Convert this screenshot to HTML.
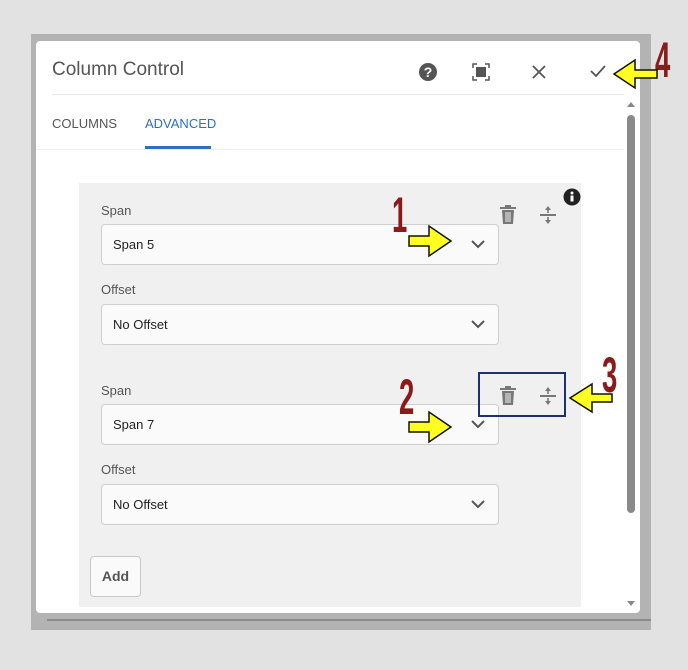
<!DOCTYPE html>
<html><head><style>
*{box-sizing:border-box;margin:0;padding:0}
body{width:688px;height:670px;background:#e2e2e2;position:relative;overflow:hidden;font-family:"Liberation Sans",sans-serif}
.abs{position:absolute}
.lbl{position:absolute;left:101px;font-size:13px;color:#555}
.fld{position:absolute;left:101px;width:398px;height:41px;background:#fafafa;border:1px solid #cfcfcf;border-radius:4px;font-size:13px;color:#222;padding:12px 11px}
.fld svg{position:absolute;right:13px;top:15px}
.num{position:absolute;font-family:"Liberation Sans",sans-serif;font-weight:bold;color:#8b1a1a;font-size:50px;line-height:1;transform:scaleX(0.55);transform-origin:left top}
</style></head><body>
<div class="abs" style="left:31px;top:34px;width:620px;height:596px;background:#b3b3b3"></div>
<div class="abs" style="left:47px;top:619px;width:604px;height:2px;background:#8a8a8a"></div>
<div class="abs" style="left:36px;top:41px;width:604px;height:572px;background:#fff;border-radius:4px"></div>
<div class="abs" style="left:52px;top:59px;font-size:19px;color:#555">Column Control</div>
<svg class="abs" style="left:418px;top:62px" width="20" height="20"><circle cx="10" cy="10" r="9" fill="#555"/><text x="10" y="15" text-anchor="middle" font-size="14" font-weight="bold" fill="#fff" font-family="Liberation Sans">?</text></svg>
<svg class="abs" style="left:471px;top:62px" width="20" height="20" fill="none" stroke="#555" stroke-width="1.5"><path d="M2 6V2h4M14 2h4v4M18 14v4h-4M6 18H2v-4"/><rect x="5" y="5" width="10" height="10" fill="#555" stroke="none"/></svg>
<svg class="abs" style="left:531px;top:64px" width="16" height="16" stroke="#555" stroke-width="1.8"><path d="M2 2L14 14M14 2L2 14"/></svg>
<svg class="abs" style="left:589px;top:63px" width="18" height="16" fill="none" stroke="#555" stroke-width="1.8"><path d="M2 8l5 5L16 3"/></svg>
<div class="abs" style="left:52px;top:94px;width:572px;height:1px;background:#eaeaea"></div>
<div class="abs" style="left:52px;top:116px;font-size:13px;color:#555">COLUMNS</div>
<div class="abs" style="left:145px;top:116px;font-size:13px;color:#2d6fc2">ADVANCED</div>
<div class="abs" style="left:145px;top:146px;width:66px;height:3px;background:#2d6fc2"></div>
<div class="abs" style="left:36px;top:149px;width:588px;height:1px;background:#eee"></div>
<div class="abs" style="left:627px;top:115px;width:8px;height:398px;background:#8a8a8a;border-radius:4px"></div>
<svg class="abs" style="left:626px;top:100px" width="10" height="8"><path d="M1 7L5 2L9 7Z" fill="#888"/></svg>
<svg class="abs" style="left:626px;top:600px" width="10" height="8"><path d="M1 1L5 6L9 1Z" fill="#888"/></svg>
<div class="abs" style="left:79px;top:183px;width:502px;height:424px;background:#f0f0f0"></div>
<svg class="abs" style="left:563px;top:188px" width="18" height="18"><circle cx="9" cy="9" r="8.5" fill="#222"/><circle cx="9" cy="5" r="1.5" fill="#fff"/><rect x="7.5" y="7.5" width="3" height="6" fill="#fff"/></svg>
<div class="lbl" style="top:203px">Span</div>
<div class="fld" style="top:224px">Span 5<svg width="14" height="9" fill="none" stroke="#555" stroke-width="2"><path d="M1 1l6 6 6-6"/></svg></div>
<div class="lbl" style="top:282px">Offset</div>
<div class="fld" style="top:304px">No Offset<svg width="14" height="9" fill="none" stroke="#555" stroke-width="2"><path d="M1 1l6 6 6-6"/></svg></div>
<div class="lbl" style="top:383px">Span</div>
<div class="fld" style="top:404px">Span 7<svg width="14" height="9" fill="none" stroke="#555" stroke-width="2"><path d="M1 1l6 6 6-6"/></svg></div>
<div class="lbl" style="top:462px">Offset</div>
<div class="fld" style="top:484px">No Offset<svg width="14" height="9" fill="none" stroke="#555" stroke-width="2"><path d="M1 1l6 6 6-6"/></svg></div>
<div class="abs" style="left:90px;top:556px;width:51px;height:41px;background:#fafafa;border:1px solid #c8c8c8;border-radius:4px;font-size:14px;font-weight:bold;color:#555;text-align:center;line-height:39px">Add</div>
<svg class="abs" style="left:499px;top:205px" width="18" height="20" fill="#777"><rect x="1" y="2" width="16" height="2"/><rect x="6" y="0" width="6" height="2"/><path d="M3 5h12l-1 14H4z"/><path d="M7 7v10M9 7v10M11 7v10" stroke="#f0f0f0" stroke-width="1"/></svg>
<svg class="abs" style="left:539px;top:205px" width="18" height="20" fill="#777"><rect x="1" y="9" width="16" height="2"/><path d="M9 1l3 4H6z M9 19l3-4H6z"/><rect x="8.2" y="4" width="1.6" height="4"/><rect x="8.2" y="12" width="1.6" height="4"/></svg>
<svg class="abs" style="left:499px;top:386px" width="18" height="20" fill="#777"><rect x="1" y="2" width="16" height="2"/><rect x="6" y="0" width="6" height="2"/><path d="M3 5h12l-1 14H4z"/><path d="M7 7v10M9 7v10M11 7v10" stroke="#f0f0f0" stroke-width="1"/></svg>
<svg class="abs" style="left:539px;top:386px" width="18" height="20" fill="#777"><rect x="1" y="9" width="16" height="2"/><path d="M9 1l3 4H6z M9 19l3-4H6z"/><rect x="8.2" y="4" width="1.6" height="4"/><rect x="8.2" y="12" width="1.6" height="4"/></svg>
<div class="abs" style="left:478px;top:372px;width:88px;height:45px;border:2px solid #1f3070"></div>
<div class="num" style="left:392px;top:190px">1</div>
<div class="num" style="left:399px;top:372px">2</div>
<div class="num" style="left:602px;top:350px">3</div>
<div class="num" style="left:655px;top:35px">4</div>
<svg class="abs" style="left:0;top:0" width="688" height="670">
<g fill="#ffff22" stroke="#111" stroke-width="1.5">
<path d="M409 236h20v-10l22 15-22 15v-10h-20z"/>
<path d="M409 422h20v-10l22 15-22 15v-10h-20z"/>
<path d="M612 394h-20v-10l-22 14 22 14v-10h20z"/>
<path d="M657 70h-22v-10l-21 14 21 14v-10h22z"/>
</g></svg>
</body></html>
